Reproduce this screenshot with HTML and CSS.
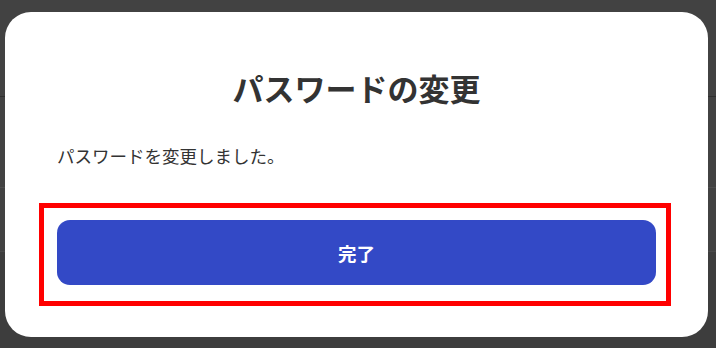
FILE: index.html
```html
<!DOCTYPE html>
<html lang="ja">
<head>
<meta charset="utf-8">
<title>パスワードの変更</title>
<link rel="stylesheet" href="styles.css">
</head>
<body>
<div class="backdrop">
  <div class="bg-row bg-row-top"></div>
  <div class="bg-row bg-row-mid"></div>
  <div class="bg-row bg-row-low"></div>
  <div class="bg-row bg-row-bottom"></div>
</div>
<div class="modal" role="dialog" aria-labelledby="modal-title">
  <h1 class="modal-title" id="modal-title">パスワードの変更</h1>
  <p class="modal-text">パスワードを変更しました。</p>
  <button class="modal-button" type="button">完了</button>
  <div class="highlight"></div>
</div>
</body>
</html>
```

FILE: styles.css
```css
* { box-sizing: border-box; }

html, body {
  margin: 0;
  padding: 0;
  width: 716px;
  height: 348px;
  overflow: hidden;
}

body {
  background: #424242;
  font-family: "Noto Sans CJK JP", "Noto Sans", sans-serif;
  color: #333333;
  position: relative;
}

.backdrop {
  display: flex;
  flex-direction: column;
  height: 348px;
}

.bg-row { width: 100%; }
.bg-row-top { height: 97px; border-bottom: 1px solid #2f2f2f; }
.bg-row-mid { height: 91px; border-bottom: 1px solid #4e4e4e; }
.bg-row-low { height: 64px; border-bottom: 1px solid #4a4a4a; }
.bg-row-bottom { flex: 1; background: #3d3d3d; }

.modal {
  position: absolute;
  left: 5px;
  top: 12px;
  width: 703px;
  height: 325px;
  background: #ffffff;
  border-radius: 26px;
  padding: 54px 52px 52px;
  display: flex;
  flex-direction: column;
}

.modal-title {
  margin: 0;
  font-size: 31px;
  line-height: 44px;
  font-weight: 700;
  text-align: center;
  color: #333333;
}

.modal-text {
  margin: 33px 0 0;
  font-size: 17.5px;
  line-height: 26px;
  color: #333333;
}

.modal-button {
  margin-top: 51px;
  height: 65px;
  width: 100%;
  border: none;
  border-radius: 13px;
  background: #3349c6;
  color: #ffffff;
  font-family: "Noto Sans CJK JP", "Noto Sans", sans-serif;
  font-size: 18.5px;
  font-weight: 700;
  cursor: pointer;
}

.highlight {
  position: absolute;
  left: 34px;
  top: 191px;
  width: 632px;
  height: 103px;
  border: 5px solid #ff0000;
  pointer-events: none;
}
```
